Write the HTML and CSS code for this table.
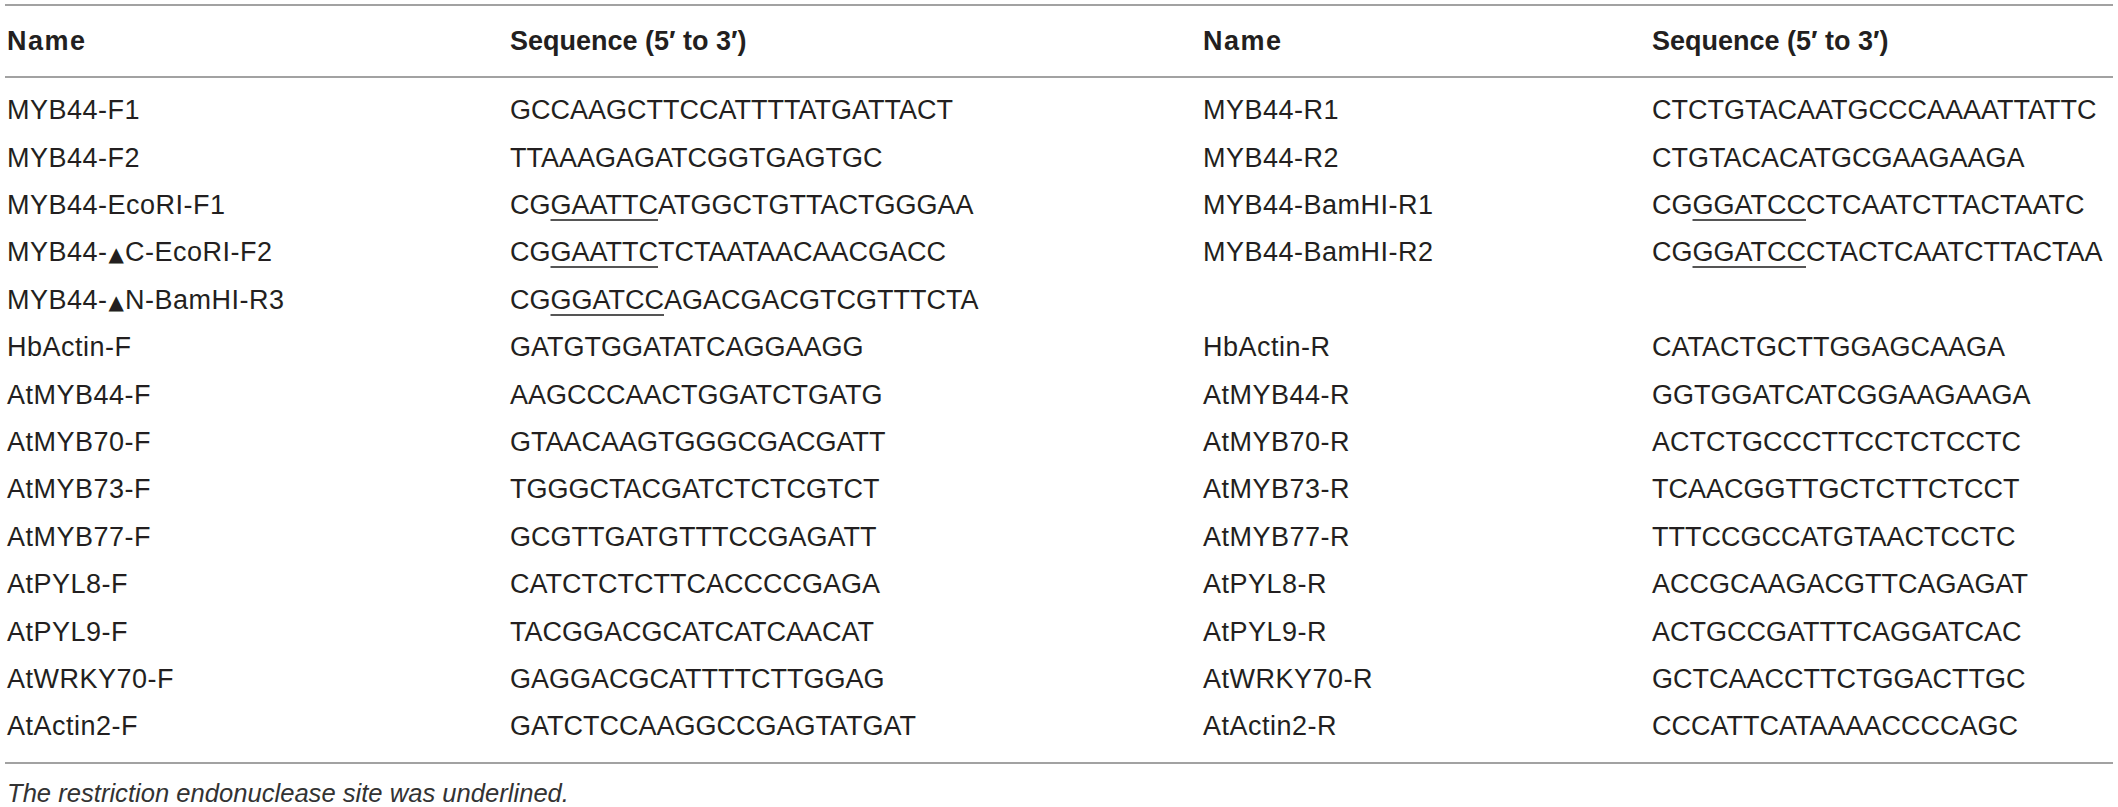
FILE: index.html
```html
<!DOCTYPE html>
<html lang="en">
<head>
<meta charset="utf-8">
<title>Primers</title>
<link rel="stylesheet" href="styles.css">
</head>
<body>
<div class="table">
  <div class="rule"></div>
  <div class="row head">
    <div class="hname">Name</div>
    <div>Sequence (5′ to 3′)</div>
    <div class="hname">Name</div>
    <div>Sequence (5′ to 3′)</div>
  </div>
  <div class="rule"></div>
  <div class="body">
    <div class="row"><div class="name">MYB44-F1</div><div>GCCAAGCTTCCATTTTATGATTACT</div><div class="name">MYB44-R1</div><div>CTCTGTACAATGCCCAAAATTATTC</div></div>
    <div class="row"><div class="name">MYB44-F2</div><div>TTAAAGAGATCGGTGAGTGC</div><div class="name">MYB44-R2</div><div>CTGTACACATGCGAAGAAGA</div></div>
    <div class="row"><div class="name">MYB44-EcoRI-F1</div><div>CG<span class="site">GAATTC</span>ATGGCTGTTACTGGGAA</div><div class="name">MYB44-BamHI-R1</div><div>CG<span class="site">GGATCC</span>CTCAATCTTACTAATC</div></div>
    <div class="row"><div class="name">MYB44-<span class="tri">▲</span>C-EcoRI-F2</div><div>CG<span class="site">GAATTC</span>TCTAATAACAACGACC</div><div class="name">MYB44-BamHI-R2</div><div>CG<span class="site">GGATCC</span>CTACTCAATCTTACTAA</div></div>
    <div class="row"><div class="name">MYB44-<span class="tri">▲</span>N-BamHI-R3</div><div>CG<span class="site">GGATCC</span>AGACGACGTCGTTTCTA</div><div class="name"></div><div></div></div>
    <div class="row"><div class="name">HbActin-F</div><div>GATGTGGATATCAGGAAGG</div><div class="name">HbActin-R</div><div>CATACTGCTTGGAGCAAGA</div></div>
    <div class="row"><div class="name">AtMYB44-F</div><div>AAGCCCAACTGGATCTGATG</div><div class="name">AtMYB44-R</div><div>GGTGGATCATCGGAAGAAGA</div></div>
    <div class="row"><div class="name">AtMYB70-F</div><div>GTAACAAGTGGGCGACGATT</div><div class="name">AtMYB70-R</div><div>ACTCTGCCCTTCCTCTCCTC</div></div>
    <div class="row"><div class="name">AtMYB73-F</div><div>TGGGCTACGATCTCTCGTCT</div><div class="name">AtMYB73-R</div><div>TCAACGGTTGCTCTTCTCCT</div></div>
    <div class="row"><div class="name">AtMYB77-F</div><div>GCGTTGATGTTTCCGAGATT</div><div class="name">AtMYB77-R</div><div>TTTCCGCCATGTAACTCCTC</div></div>
    <div class="row"><div class="name">AtPYL8-F</div><div>CATCTCTCTTCACCCCGAGA</div><div class="name">AtPYL8-R</div><div>ACCGCAAGACGTTCAGAGAT</div></div>
    <div class="row"><div class="name">AtPYL9-F</div><div>TACGGACGCATCATCAACAT</div><div class="name">AtPYL9-R</div><div>ACTGCCGATTTCAGGATCAC</div></div>
    <div class="row"><div class="name">AtWRKY70-F</div><div>GAGGACGCATTTTCTTGGAG</div><div class="name">AtWRKY70-R</div><div>GCTCAACCTTCTGGACTTGC</div></div>
    <div class="row"><div class="name">AtActin2-F</div><div>GATCTCCAAGGCCGAGTATGAT</div><div class="name">AtActin2-R</div><div>CCCATTCATAAAACCCCAGC</div></div>
  </div>
  <div class="rule"></div>
  <p class="caption">The restriction endonuclease site was underlined.</p>
</div>
</body>
</html>
```

FILE: styles.css
```css
html, body {
  margin: 0;
  padding: 0;
  background: #ffffff;
}

body {
  font-family: "Liberation Sans", Arial, sans-serif;
  color: #231f20;
}

.table {
  margin: 4px 5px 0 5px;
  width: 2108px;
}

.rule {
  height: 2px;
  background: #a2a2a2;
}

.row {
  display: grid;
  grid-template-columns: 503px 693px 449px 1fr;
  padding-left: 2px;
  font-size: 27px;
  height: 47.4px;
  line-height: 47.4px;
  white-space: nowrap;
}

.row.head {
  height: 70px;
  line-height: 70px;
  font-weight: bold;
}

.name {
  letter-spacing: 0.5px;
}

.hname {
  letter-spacing: 1.5px;
}

.body {
  padding: 9.3px 0 11px 0;
}

.site {
  text-decoration: underline;
  text-decoration-thickness: 2px;
  text-underline-offset: 5px;
  text-decoration-color: #555555;
}

.tri {
  font-family: "DejaVu Sans", sans-serif;
  font-size: 20px;
  margin: 0 1px;
  letter-spacing: 0;
}

.caption {
  margin: 14px 0 0 2px;
  font-size: 25.6px;
  line-height: 30px;
  font-style: italic;
  color: #333333;
}
```
